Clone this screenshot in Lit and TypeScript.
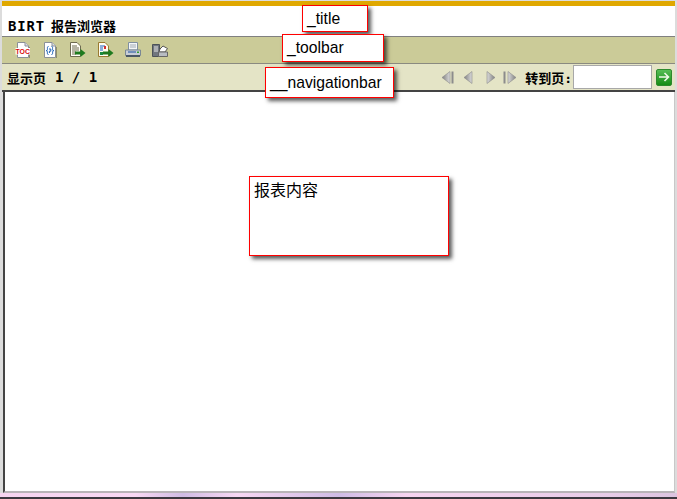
import { LitElement, html, css, svg } from "lit";
import { customElement } from "lit/decorators.js";

const doc = (inner: unknown) => svg`<svg class="ico" width="16" height="16" viewBox="0 0 16 16">
  <path d="M2.5 .5H10L13.5 4V15.5H2.5Z" fill="#fff" stroke="#8a9098"/><path d="M10 .5V4H13.5" fill="#d8dce4" stroke="#8a9098"/><path d="M14.5 5V16.500H4" fill="none" stroke="#8e8e68"/>${inner}</svg>`;

const icons = [
  doc(svg`<rect x="0.500" y="6" width="14.500" height="6.500" fill="#fff"/><text x="0.500" y="12" font-family="Liberation Sans" font-size="7.500" font-weight="700" fill="#d80c0c" textLength="14.500" lengthAdjust="spacingAndGlyphs">TOC</text>`),
  doc(svg`<path d="M6.500 4.500C5 4.500 5.600 6 5.400 7.600S4.400 8.500 4 8.500C4.800 8.500 5.300 9 5.400 10S5 12.500 6.500 12.500M9.500 4.500C11 4.500 10.400 6 10.600 7.600S11.600 8.500 12 8.500C11.200 8.500 10.700 9 10.600 10S11 12.500 9.500 12.500" fill="none" stroke="#1b62b8"/><path d="M7 7H8.800V9.200H7.400V11" fill="none" stroke="#1b62b8"/>`),
  svg`<svg class="ico" width="17" height="16" viewBox="0 0 17 16"><path d="M1.500 .5H8L11.500 4V14.500H1.500Z" fill="#fffef6" stroke="#6d6a50"/><path d="M3 4H8M3 6H10M3 8H10M3 10H7M3 12H7" stroke="#6d6a50"/><path d="M6 9.500H11.500V7L16.500 11L11.500 15V12.500H6Z" fill="#1e7a1e"/></svg>`,
  svg`<svg class="ico" width="17" height="16" viewBox="0 0 17 16"><path d="M1.500 .5H8L11.500 4V14.500H1.500Z" fill="#fffdf0" stroke="#9a7a30"/><path d="M3 4H8M3 6H6M3 8H6" stroke="#1a5fc0"/><path d="M3 10H6V13H3Z" fill="#1a8a40"/><path d="M7 4H9V7H7Z" fill="#d03030"/><path d="M6 9.500H11.500V7L16.500 11L11.500 15V12.500H6Z" fill="#1e7a1e"/></svg>`,
  svg`<svg class="ico" width="16" height="16" viewBox="0 0 16 16"><path d="M3.500 .5H12.500V8H3.500Z" fill="#f4f6f8" stroke="#8090a0"/><path d="M5 3H11M5 5H11" stroke="#a0aab4"/><path d="M.5 8H15.500V13.500H.5Z" fill="#c8ced6" stroke="#7a8894"/><path d="M1 13H15V15H1Z" fill="#4a5866"/><path d="M3 10H11" stroke="#1a50a0"/><rect x="12" y="9.500" width="2" height="1.500" fill="#30a030"/></svg>`,
  svg`<svg class="ico" width="16" height="16" viewBox="0 0 16 16"><path d="M.5 2.500H7.500V14.500H.5Z" fill="#70767e" stroke="#4c5258"/><path d="M2 5H6M2 7H6M2 9H6" stroke="#e8e8e8"/><path d="M8 7L11 4L15.500 6.500L13 10H7Z" fill="#fff" stroke="#555"/><path d="M6.500 10H15.500V14.500H6.500Z" fill="#b8bcc2" stroke="#666"/></svg>`,
];

const arrow = (dir: "l" | "r", bar: boolean) => {
  const w = bar ? 13 : 9;
  const id = `${dir}${bar ? "b" : ""}`;
  const tri = dir === "l" ? `M${w - (bar ? 5 : 1)} 0.5V12.500L${w - (bar ? 13 : 9)} 6.500Z` : `M${bar ? 5 : 1} 0.5V12.500L${bar ? 13 : 9} 6.500Z`;
  const barsX = dir === "l" ? [w - 3.5, w - 1.5] : [0.5, 3];
  return svg`<svg class="ico" width=${w} height="13" viewBox="0 0 ${w} 13">
    <defs><linearGradient id=${id} x1="0" x2="1" y1="0" y2="0">
      <stop offset="0" stop-color=${dir === "l" ? "#808080" : "#dadada"}/><stop offset="1" stop-color=${dir === "l" ? "#dadada" : "#808080"}/>
    </linearGradient></defs>
    ${bar ? svg`<rect x=${barsX[0]} y="0.500" width="2" height="12" fill="#8c8c8c"/>` : ""}
    <path d=${tri} fill="url(#${id})" stroke="#8c8c8c" stroke-width=".6"/></svg>`;
};

@customElement("app-root")
export class AppRoot extends LitElement {
  static styles = css`
    :host { display: block; position: relative; width: 677px; height: 499px; overflow: hidden; background: #e4e2e6; font-family: "Liberation Sans", "Noto Sans CJK SC", sans-serif; color: #000; }
    .frame { height: 493px; box-sizing: border-box; padding: 1px 2px 0 2px; display: flex; flex-direction: column; background: #dcdcdc; }
    .gold { height: 5px; flex: none; background: #e0a800; }
    .title { height: 30px; flex: none; box-sizing: border-box; background: #fff; display: flex; align-items: flex-end; padding: 0 0 0 6px; font: 700 13px "DejaVu Sans Mono", "Noto Sans CJK SC", monospace; white-space: pre; line-height: 19px; }
    .lat { font-size: 14px; letter-spacing: .8px; }
    .cjk { margin-left: 6px; }
    .toolbar { height: 28px; flex: none; box-sizing: border-box; background: #cbcb98; border-top: 1px solid #808080; border-bottom: 1px solid #8a8a80; display: flex; align-items: center; padding: 0 0 0 13px; gap: 11px; }
    .ico { display: block; flex: none; }
    .nav { height: 28px; flex: none; box-sizing: border-box; background: #e4e4c6; border-bottom: 2px solid #444; display: flex; align-items: center; padding: 0 0 0 5px; font: 700 13px "DejaVu Sans Mono", "Noto Sans CJK SC", monospace; }
    .pg { white-space: pre; }
    .nums { white-space: pre; margin-left: 9px; font-size: 14px; }
    .spacer { flex: 1; }
    .arrows { display: flex; align-items: center; margin-right: 9px; }
    .a2 { margin-left: 9px; }
    .a3 { margin-left: 13px; }
    .a4 { margin-left: 8px; }
    .input { width: 79px; height: 24px; box-sizing: border-box; background: #fff; border: 1px solid #a8a8a8; margin: 0 4px 0 1px; }
    .go { width: 16px; height: 17px; border-radius: 2px; background: linear-gradient(#55bd55, #168c16); border: 1px solid #2d8a2d; box-sizing: border-box; margin-right: 3px; display: flex; align-items: center; justify-content: center; }
    .content { flex: 1; background: #fff; border-left: 2px solid #444; border-right: 1px solid #c8c8c8; border-bottom: 2px solid #b8b4b8; margin-left: 1px; }
    .strip { height: 4px; background: linear-gradient(90deg, #f6d4f0, #f8d8f4 20%, #d0bce4 27%, #f8d8f4 35%, #cfbce6 50%, #f6d4f0 60%, #e8cce8 90%, #dcc4e0); }
    .dark { height: 2px; background: #3c3840; }
    .tag { position: absolute; box-sizing: border-box; background: #fff; border: 1px solid #f00; box-shadow: 3px 3px 4px rgba(0,0,0,.65); font-size: 15.700px; line-height: 18px; padding: 4px 0 0 4px; white-space: pre; }
    .t1 { left: 302px; top: 5px; width: 66px; height: 27px; }
    .t2 { left: 282px; top: 34px; width: 102px; height: 28px; }
    .t3 { left: 265px; top: 67px; width: 129px; height: 31px; padding-top: 6px; }
    .t4 { left: 249px; top: 176px; width: 200px; height: 80px; font-size: 16px; line-height: 20px; padding-top: 4px; }
  `;

  render() {
    return html`
      <div class="frame">
        <div class="gold"></div>
        <div class="title"><span class="lat">BIRT</span><span class="cjk">报告浏览器</span></div>
        <div class="toolbar">${icons}</div>
        <div class="nav">
          <span class="pg">显示页</span><span class="nums">1 / 1</span>
          <span class="spacer"></span>
          <span class="arrows">
            <span>${arrow("l", true)}</span><span class="a2">${arrow("l", false)}</span><span class="a3">${arrow("r", false)}</span><span class="a4">${arrow("r", true)}</span>
          </span>
          <span>转到页:</span>
          <span class="input"></span>
          <span class="go"><svg class="ico" width="12" height="12" viewBox="0 0 12 12"><path d="M1 6H10M6.500 2L10.500 6L6.500 10" fill="none" stroke="#eef8e8" stroke-width="1.600"/></svg></span>
        </div>
        <div class="content"></div>
      </div>
      <div class="strip"></div>
      <div class="dark"></div>
      <div class="tag t1">_title</div>
      <div class="tag t2">_toolbar</div>
      <div class="tag t3">__navigationbar</div>
      <div class="tag t4">报表内容</div>
    `;
  }
}
